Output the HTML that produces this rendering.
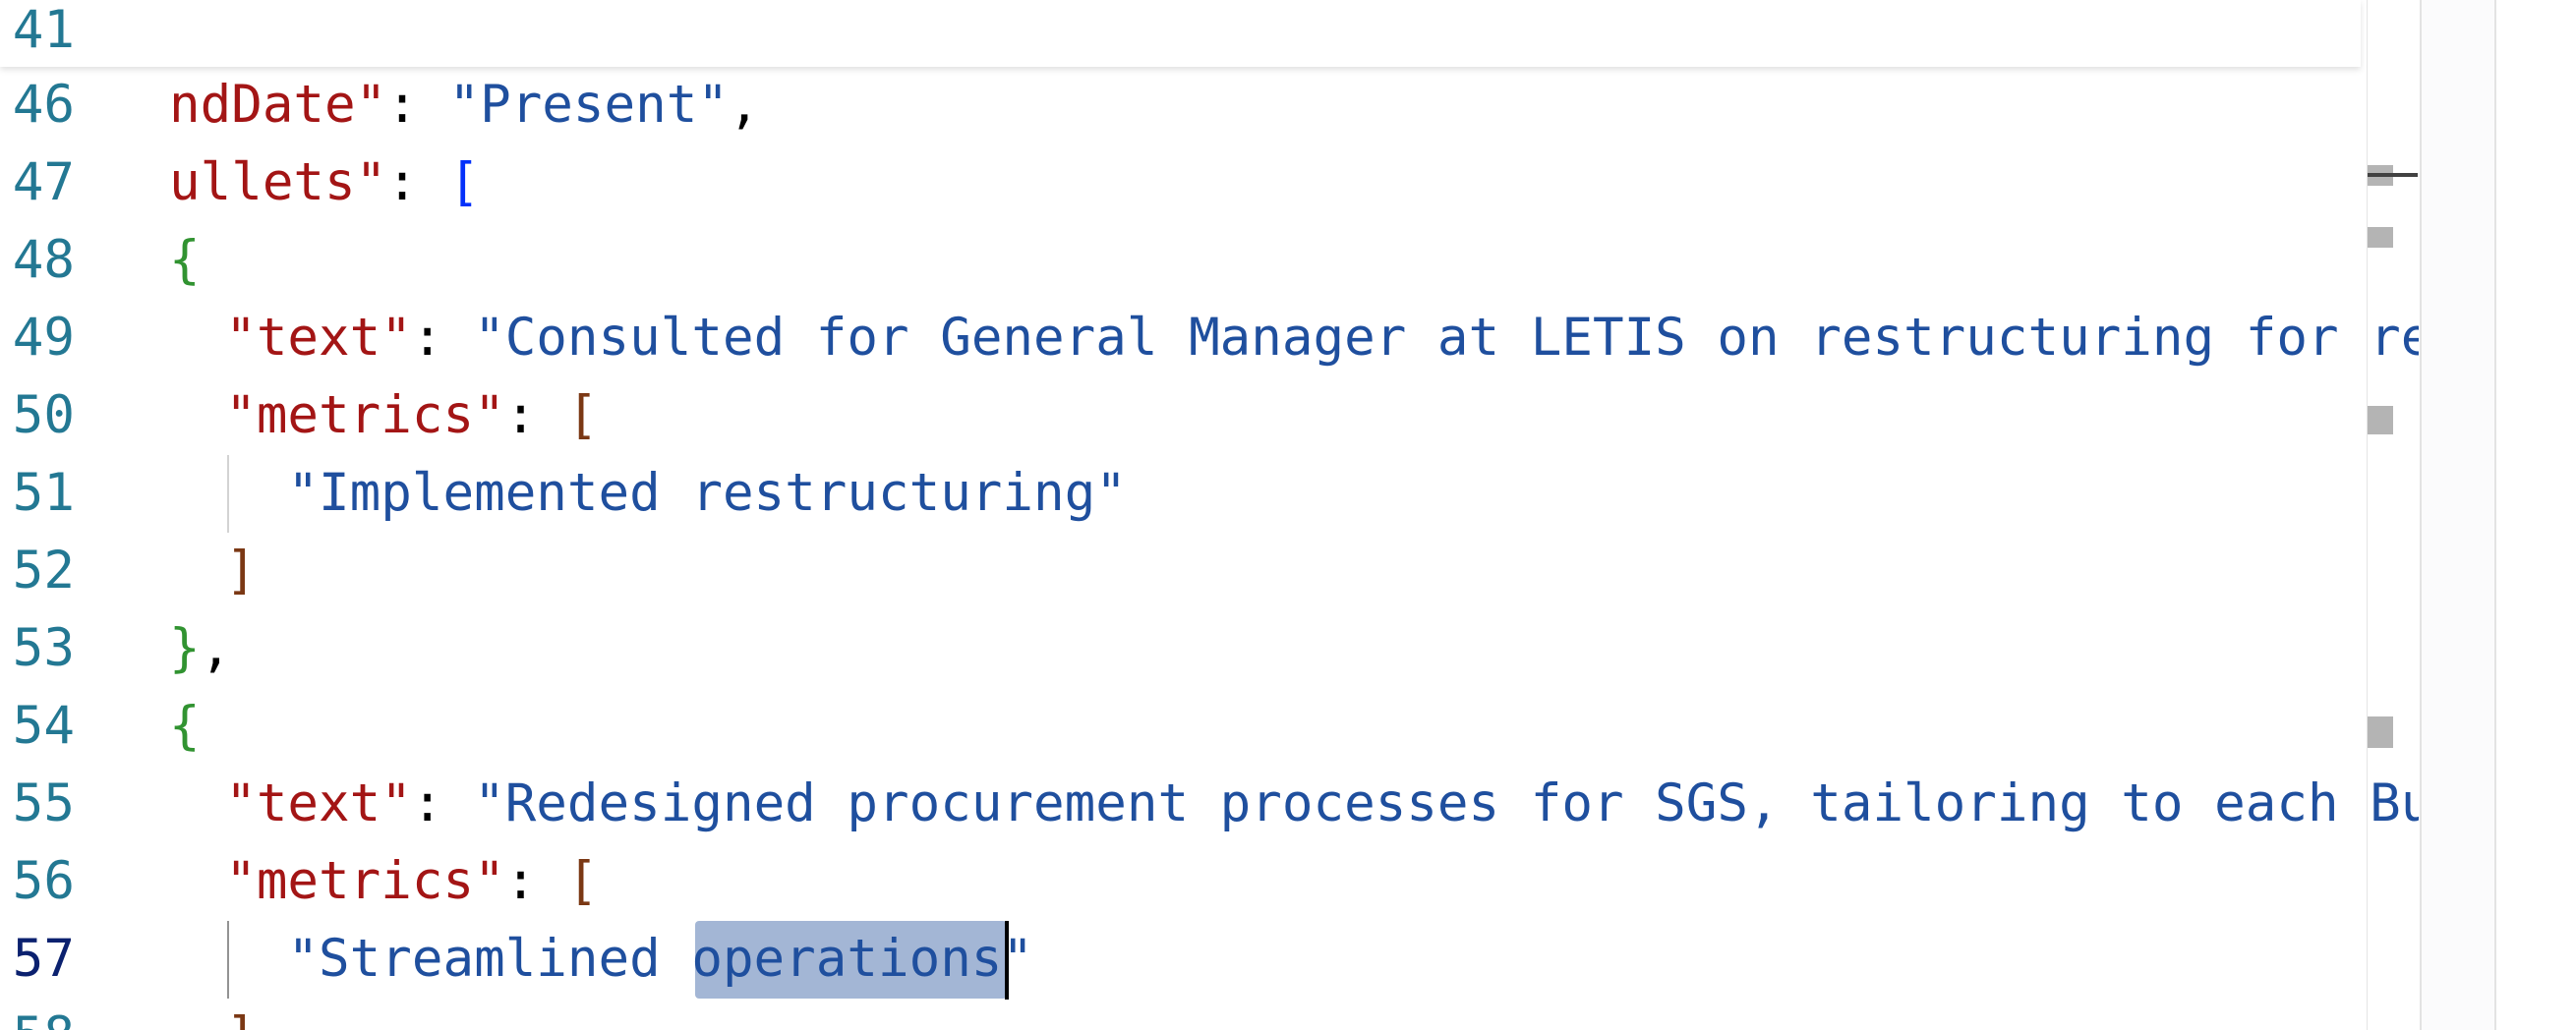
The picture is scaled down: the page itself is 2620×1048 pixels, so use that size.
<!DOCTYPE html>
<html><head><meta charset="utf-8"><style>
html,body{margin:0;padding:0;background:#fff;width:2620px;height:1048px;overflow:hidden;position:relative}
.mono{font-family:"DejaVu Sans Mono","Liberation Mono",monospace;font-size:52.5px;line-height:79px;white-space:pre}
.ln{position:absolute;left:0;width:76px;text-align:right;color:#237893}
.code{position:absolute;left:172px;width:2288px;overflow:hidden;color:#000}
.i2{left:166px;width:2294px}
.k{color:#a31515}.s{color:#1f4f9e}.b1{color:#0431fa}.b2{color:#319331}.b3{color:#7b3814}
.mm{position:absolute;left:2408px;width:26px;background:#b4b4b4}
</style></head><body>
<div style="position:absolute;left:2407px;top:0;width:1px;height:1048px;background:#e5e5e5"></div>
<div style="position:absolute;left:2461px;top:0;width:74px;height:1048px;background:#fbfbfc;border-left:2px solid #e3e3e3;border-right:2px solid #e3e3e3"></div>
<div class="mm" style="top:168px;height:21px"></div>
<div style="position:absolute;left:2408px;top:176px;width:51px;height:4px;background:#424242"></div>
<div class="mm" style="top:231px;height:21px"></div>
<div class="mm" style="top:413px;height:29px"></div>
<div class="mm" style="top:729px;height:32px"></div>

<div style="position:absolute;left:231px;top:463px;width:2px;height:79px;background:#d3d3d3"></div>
<div style="position:absolute;left:231px;top:937px;width:2px;height:79px;background:#939393"></div>
<div style="position:absolute;left:707px;top:937px;width:317px;height:79px;background:#a3b6d5;border-radius:4px"></div>
<div style="position:absolute;left:1022px;top:937px;width:4px;height:80px;background:#000"></div>

<div class="mono ln" style="top:67px">46</div>
<div class="mono ln" style="top:146px">47</div>
<div class="mono ln" style="top:225px">48</div>
<div class="mono ln" style="top:304px">49</div>
<div class="mono ln" style="top:383px">50</div>
<div class="mono ln" style="top:462px">51</div>
<div class="mono ln" style="top:541px">52</div>
<div class="mono ln" style="top:620px">53</div>
<div class="mono ln" style="top:699px">54</div>
<div class="mono ln" style="top:778px">55</div>
<div class="mono ln" style="top:857px">56</div>
<div class="mono ln" style="top:936px;color:#0b216f">57</div>
<div class="mono ln" style="top:1015px">58</div>

<div class="mono code" style="top:67px"><span class="k">ndDate"</span>: <span class="s">"Present"</span>,</div>
<div class="mono code" style="top:146px"><span class="k">ullets"</span>: <span class="b1">[</span></div>
<div class="mono code" style="top:225px"><span class="b2">{</span></div>
<div class="mono code i2" style="top:304px">  <span class="k">"text"</span>: <span class="s">"Consulted for General Manager at LETIS on restructuring for revenue growth",</span></div>
<div class="mono code i2" style="top:383px">  <span class="k">"metrics"</span>: <span class="b3">[</span></div>
<div class="mono code i2" style="top:462px">    <span class="s">"Implemented restructuring"</span></div>
<div class="mono code i2" style="top:541px">  <span class="b3">]</span></div>
<div class="mono code" style="top:620px"><span class="b2">}</span>,</div>
<div class="mono code" style="top:699px"><span class="b2">{</span></div>
<div class="mono code i2" style="top:778px">  <span class="k">"text"</span>: <span class="s">"Redesigned procurement processes for SGS, tailoring to each Business Unit",</span></div>
<div class="mono code i2" style="top:857px">  <span class="k">"metrics"</span>: <span class="b3">[</span></div>
<div class="mono code i2" style="top:936px">    <span class="s">"Streamlined operations"</span></div>
<div class="mono code i2" style="top:1015px">  <span class="b3">]</span></div>

<div style="position:absolute;left:0;top:0;width:2401px;height:68px;background:#fff;box-shadow:0 3px 6px rgba(0,0,0,0.12)"></div>
<div class="mono ln" style="top:-9px">41</div>
</body></html>
